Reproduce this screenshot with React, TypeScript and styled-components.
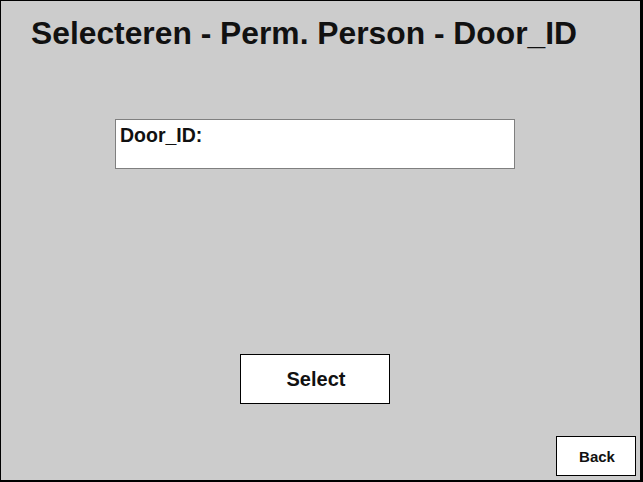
import React from "react";
import styled, { createGlobalStyle } from "styled-components";

const Global = createGlobalStyle`
  html, body {
    margin: 0;
    padding: 0;
    background: #000000;
  }
  body {
    font-family: "Liberation Sans", Arial, sans-serif;
  }
`;

const Screen = styled.div`
  width: 639px;
  height: 479px;
  margin: 1px 0 0 1px;
  background: #cccccc;
  box-sizing: border-box;
  display: flex;
  flex-direction: column;
  padding: 16px 4px 4px 0;
`;

const Title = styled.h1`
  margin: 0;
  padding-left: 30px;
  font-size: 31.8px;
  line-height: 32px;
  font-weight: bold;
  color: #111111;
  white-space: nowrap;
`;

const Content = styled.div`
  width: 400px;
  margin-left: 114px;
  display: flex;
  flex-direction: column;
  align-items: center;
`;

const Field = styled.div`
  width: 400px;
  height: 50px;
  margin-top: 70px;
  box-sizing: border-box;
  background: #ffffff;
  border: 1px solid #7f7f7f;
  padding: 5px 0 0 4px;
`;

const FieldLabel = styled.div`
  font-size: 19.5px;
  line-height: 20px;
  font-weight: bold;
  color: #111111;
`;

const Button = styled.button<{ $w: number; $h: number; $size: number }>`
  width: ${(p) => p.$w}px;
  height: ${(p) => p.$h}px;
  box-sizing: border-box;
  background: #ffffff;
  border: 1px solid #000000;
  border-radius: 0;
  padding: 0 0 0 2px;
  font-family: "Liberation Sans", Arial, sans-serif;
  font-size: ${(p) => p.$size}px;
  font-weight: bold;
  color: #111111;
  display: flex;
  align-items: center;
  justify-content: center;
  cursor: pointer;
`;

const SelectButton = styled(Button)`
  margin-top: 185px;
`;

const BackButton = styled(Button)`
  align-self: flex-end;
  margin-top: auto;
`;

export default function App() {
  return (
    <>
      <Global />
      <Screen>
        <Title>Selecteren - Perm. Person - Door_ID</Title>
        <Content>
          <Field>
            <FieldLabel>Door_ID:</FieldLabel>
          </Field>
          <SelectButton $w={150} $h={50} $size={20}>
            Select
          </SelectButton>
        </Content>
        <BackButton $w={80} $h={40} $size={15}>
          Back
        </BackButton>
      </Screen>
    </>
  );
}
